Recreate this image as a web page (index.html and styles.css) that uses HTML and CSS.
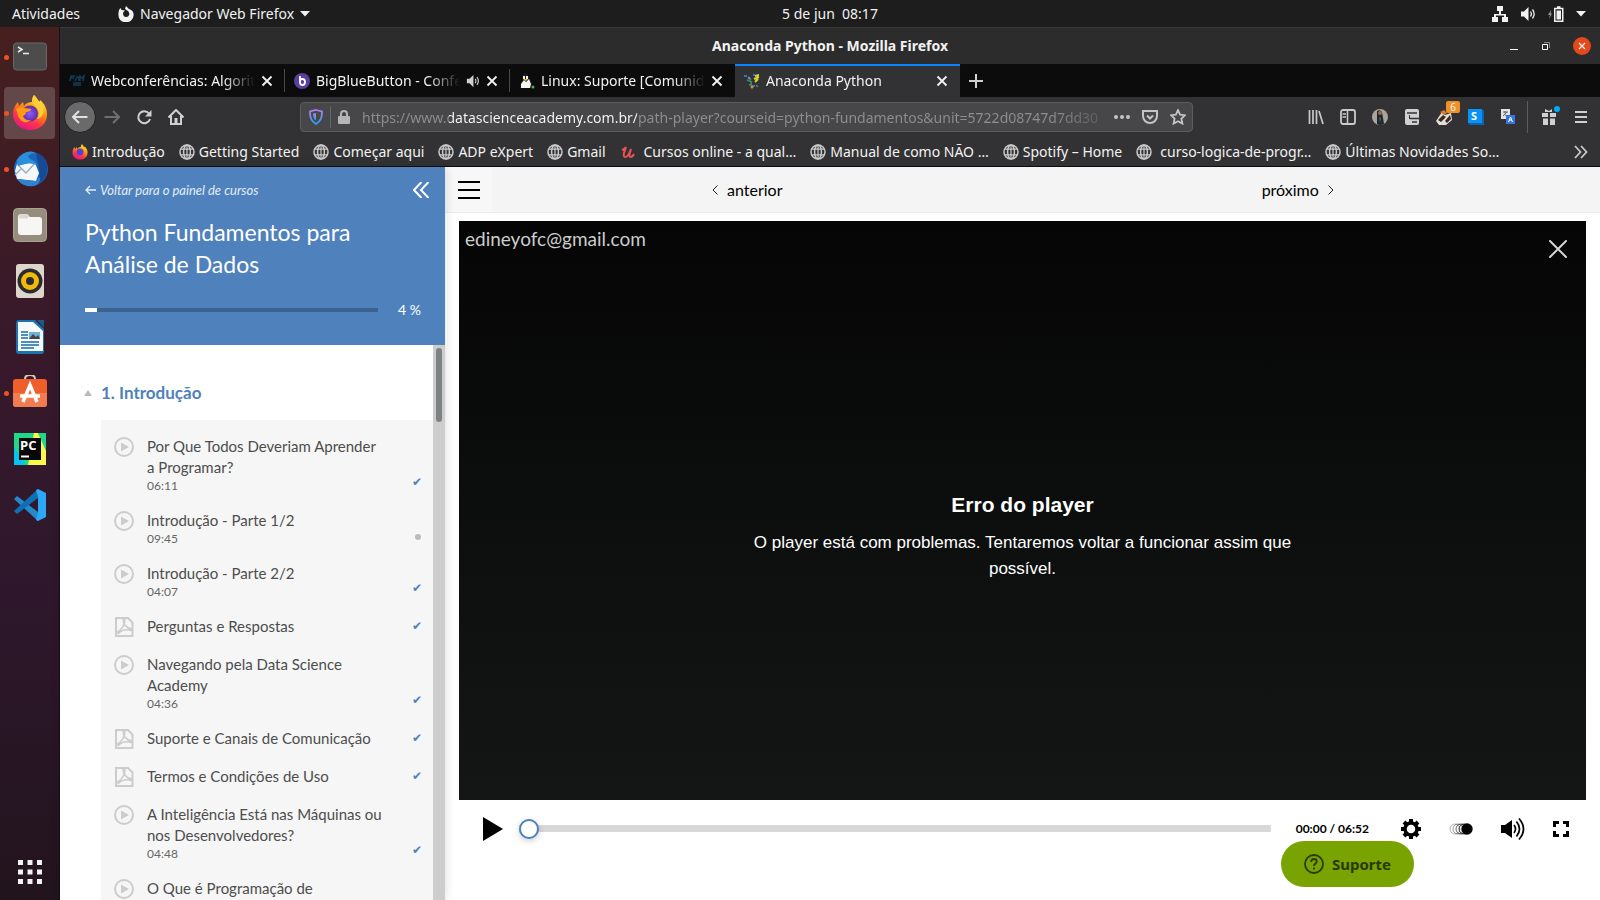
FILE: index.html
```html
<!DOCTYPE html>
<html lang="pt-BR">
<head>
  <meta charset="UTF-8" />
  <meta name="viewport" content="width=device-width, initial-scale=1.0" />
  <title>Anaconda Python</title>
  <link rel="stylesheet" href="styles.css">
</head>
<body>
  <!-- shared icons -->
  <svg class="defs" width="0" height="0" aria-hidden="true">
    <symbol id="globe" viewBox="0 0 16 16">
      <g fill="none" stroke="#c9c9ca" stroke-width="1.5">
        <circle cx="8" cy="8" r="7" /><ellipse cx="8" cy="8" rx="3.4" ry="7" /><path d="M8 1v14M2 5.2h12M2 10.8h12" stroke-width="1.2" />
      </g>
    </symbol>
    <symbol id="close" viewBox="0 0 12 12"><path d="M1.5 1.5l9 9M10.5 1.5l-9 9" stroke="currentColor" stroke-width="1.8" /></symbol>
    <symbol id="play" viewBox="0 0 20 20"><circle cx="10" cy="10" r="9" fill="none" stroke="#ccc" stroke-width="2" /><path d="M7 5.5v9l8-4.5z" fill="#ccc" /></symbol>
    <symbol id="pdf" viewBox="0 0 20 20">
      <path d="M2 1h12l4.500 4.500V19H2z" fill="none" stroke="#ccc" stroke-width="2" />
      <path d="M9 1c0 6 2 10 9 11M11 1c0 7-3 12-9 15M4 17c3-4 8-5 14-3.500" fill="none" stroke="#ccc" stroke-width="1.600" />
    </symbol>
    <symbol id="sound" viewBox="0 0 16 16"><path d="M1 5.500h3L8.500 1v14L4 10.500H1z" fill="currentColor" /><path d="M10.500 5.500q1.700 2.500 0 5M12.500 3.500q3.300 4.500 0 9" fill="none" stroke="currentColor" stroke-width="1.300" /></symbol>
  </svg>

  <header class="topbar">
    <div class="topbar-left">
      <button class="top-btn">Atividades</button>
      <button class="top-btn app-menu">
        <svg width="16" height="16" viewBox="0 0 16 16"><path d="M8 0l3 3C15 4 16 7 15.500 10A7.500 6.500 0 0 1 .5 9.500C.2 6 1 3 2.500 2l1 2L7 4.500 5.500 6C4.500 7 5 11 8 11c4 0 4-4 2-6L7 3z" fill="#f2f2f2" /></svg>
        <span>Navegador Web Firefox</span>
        <svg width="10" height="6" viewBox="0 0 10 6"><path d="M0 0h10L5 5.500z" fill="#f2f2f2" /></svg>
      </button>
    </div>
    <button class="top-btn clock">5 de jun&nbsp; 08:17</button>
    <div class="status">
      <svg width="16" height="16" viewBox="0 0 16 16" fill="#f2f2f2"><path d="M5 0h6v5H9v3h5v3h2v5h-6v-5h2V9.500H4V11h2v5H0v-5h2V8h5V5H5z" /></svg>
      <svg width="16" height="16" color="#f2f2f2"><use href="#sound" /></svg>
      <svg width="16" height="16" viewBox="0 0 16 16"><path d="M3 4L0 9h2l-1 4 3-5.500H2.500z" fill="#999" /><path d="M6.750 2.500h8v12.700h-8zM9 1h3.500" fill="none" stroke="#f2f2f2" stroke-width="1.500" /><path d="M8.500 4.500H13v9H8.500z" fill="#f2f2f2" /></svg>
      <svg width="10" height="6" viewBox="0 0 10 6"><path d="M0 0h10L5 5.500z" fill="#f2f2f2" /></svg>
    </div>
  </header>

  <div class="desktop">
    <nav class="dock" aria-label="Dock">
      <button class="dock-item running" aria-label="Terminal">
        <svg width="36" height="36" viewBox="0 0 36 36"><rect x="1.500" y="4" width="33" height="27" rx="3" fill="#4c4c4c" stroke="#686868" /><path d="M6 8l4 2.500L6 13M11 14.500h6" fill="none" stroke="#eee" stroke-width="1.500" /></svg>
      </button>
      <button class="dock-item running active" aria-label="Firefox">
        <svg width="36" height="36" viewBox="0 0 36 36">
          <defs><linearGradient id="fx" x1=".8" y1="0" x2=".3" y2="1"><stop offset="0" stop-color="#fff44f" /><stop offset=".4" stop-color="#ff980e" /><stop offset=".7" stop-color="#ff3647" /><stop offset="1" stop-color="#e31587" /></linearGradient>
          <radialGradient id="fg"><stop offset="0" stop-color="#9059ff" /><stop offset="1" stop-color="#5b2fa8" /></radialGradient></defs>
          <path d="M22 0c3 3 4 5 5 8 1-1 1-2 1-3 5 4 7 9 7 14 0 10-7 16-17 16S1 28 1 19C1 14 3 10 6 7l1 4 4-4 1 4c2-3 5-4 8-4 0-3 1-5 2-7z" fill="url(#fx)" />
          <circle cx="18" cy="18.500" r="8" fill="url(#fg)" />
          <path d="M4 14c3-2 6-3 8-1l7 1c0 2-3 3-5 3 0 3-2 3-3 4 1 3 4 5 8 4-3 3-9 3-11-1-3-3-2-6-4-10z" fill="#ff9b12" />
          <path d="M22 0c-4 6-1 9 3 13 3 4 2 8 0 11 8-1 9-14 2-18z" fill="#ffcf36" />
        </svg>
      </button>
      <button class="dock-item running" aria-label="Thunderbird">
        <svg width="36" height="36" viewBox="0 0 36 36">
          <circle cx="19" cy="18" r="17" fill="#1c65b8" /><path d="M5 9C9 2 17-2 24 2c-7 0-9 4-9 8L6 16z" fill="#2b8fd9" /><path d="M24 2c8 2 13 10 11 18-2 9-8 14-15 15 8-4 8-10 7-18z" fill="#174a94" />
          <path d="M5 13l18-1 4 10-3 8-19-2-2-8z" fill="#f4f7fb" /><path d="M5 13l9 9 9-10M3 24l6-6" fill="none" stroke="#9aaabd" stroke-width="1.300" /><path d="M6 15C4 9 8 5 14 3l4 5c3 1 6 3 7 6l-8-2z" fill="#2b8fd9" /><path d="M5 28l19 2 4-4c1 4-2 8-6 9-7 1-13-1-17-7z" fill="#3182cd" />
        </svg>
      </button>
      <button class="dock-item" aria-label="Arquivos">
        <svg width="36" height="36" viewBox="0 0 36 36"><rect x="1.500" y="1.500" width="33" height="33" rx="4" fill="#958e7e" stroke="#aaa392" /><path d="M6 10q0-3 3-3h6l3 3h9q3 0 3 3v12q0 3-3 3H9q-3 0-3-3z" fill="#f7f6f3" /><path d="M7 9q0-2 2-2h6l2 3-2 1.500H7z" fill="#ddd9d0" /></svg>
      </button>
      <button class="dock-item" aria-label="Rhythmbox">
        <svg width="36" height="36" viewBox="0 0 36 36"><rect x="4" y="1" width="28" height="34" rx="3" fill="#dcd6cd" /><circle cx="18" cy="18" r="12.500" fill="#2b2b2e" /><circle cx="18" cy="18" r="9" fill="#f0b90b" /><circle cx="18" cy="18" r="4" fill="#2b2b2e" /></svg>
      </button>
      <button class="dock-item" aria-label="LibreOffice Writer">
        <svg width="36" height="36" viewBox="0 0 36 36"><path d="M7 1h16l9 9v22q0 3-3 3H7q-3 0-3-3V4q0-3 3-3z" fill="#1b74ad" /><path d="M6 3h15l10 9v20H6z" fill="#f6fafc" /><path d="M25 1h7v8z" fill="#1a5c88" /><path d="M9 13h7M9 16h7M9 19h7M9 23h18M9 26h18M9 29h13" stroke="#1b6ca3" stroke-width="1.500" /><path d="M17 13h11v7H17z" fill="#6ab4dc" /><path d="M17 20l4-5 3 3 2-2 2 4z" fill="#444" /></svg>
      </button>
      <button class="dock-item running" aria-label="Ubuntu Software">
        <svg width="36" height="36" viewBox="0 0 36 36"><path d="M13 6V4q0-4 5-4t5 4v2" fill="none" stroke="#d8c9b0" stroke-width="2" /><rect x="1" y="4" width="34" height="28" rx="3" fill="#ee5f2c" /><path d="M1 18h34v11q0 3-3 3H4q-3 0-3-3z" fill="#f27c50" /><path d="M11 27l7-17 7 17M8 21h20" fill="none" stroke="#fff" stroke-width="3.500" /></svg>
      </button>
      <button class="dock-item" aria-label="PyCharm">
        <svg width="36" height="36" viewBox="0 0 36 36"><path d="M2 2h32v32H2z" fill="#21d789" /><path d="M22 2h4l8 18v14H16z" fill="#fcf84a" /><path d="M26 2h8v14z" fill="#21d789" /><path d="M2 16l12 18H2z" fill="#07c3f2" /><path d="M7 7h22v22H7z" fill="#080808" /><text class="pc-logo" x="8" y="19">PC</text><path d="M9 25.500h8" stroke="#fff" stroke-width="2" /></svg>
      </button>
      <button class="dock-item" aria-label="Visual Studio Code">
        <svg width="36" height="36" viewBox="0 0 36 36"><path d="M2 12l3-3 21 16v9z" fill="#2489ca" /><path d="M2 24l3 3 21-16V2z" fill="#0f6fb5" /><path d="M26 2l8 4v24l-8 4-2-1 2-7V10l-2-7z" fill="#2aa7f5" /></svg>
      </button>
      <button class="dock-item apps" aria-label="Mostrar aplicativos">
        <svg width="24" height="24" viewBox="0 0 24 24"><path d="M2.500 0v24M12 0v24M21.500 0v24" stroke="#f2f2f2" stroke-width="5" stroke-dasharray="5 4.500" /></svg>
      </button>
    </nav>

    <div class="browser">
      <div class="titlebar">
        <span class="window-title">Anaconda Python - Mozilla Firefox</span>
        <div class="window-btns">
          <button aria-label="Minimizar"><svg width="10" height="10" viewBox="0 0 10 10"><path d="M1 8.500h8" stroke="#fff" /></svg></button>
          <button aria-label="Restaurar"><svg width="10" height="10" viewBox="0 0 10 10"><path d="M1.500 3.500h5v5h-5z" fill="none" stroke="#fff" /><path d="M3 1.500h5.500V7" fill="none" stroke="#888" /></svg></button>
          <button class="win-close" aria-label="Fechar"><svg width="8" height="8"><use href="#close" /></svg></button>
        </div>
      </div>

      <div class="tabs">
        <div class="tab">
          <svg width="16" height="16" viewBox="0 0 16 16"><path d="M1 8l1-5h4M2 5h3M6 8l2-4h2v4M11 8V3l2 2 2-2-1 5M4 10h8M4 12h8" fill="none" stroke="#123c58" stroke-width="1.500" /></svg>
          <span class="tab-title">Webconferências: Algorit</span>
          <button aria-label="Fechar aba"><svg width="12" height="12"><use href="#close" /></svg></button>
        </div>
        <div class="tab">
          <svg width="16" height="16" viewBox="0 0 16 16"><circle cx="8" cy="8" r="8" fill="#5b3f9c" /><path d="M6 3v7M6 8q0-2 2.500-2t2.500 3-2.500 3T6 9.500" fill="none" stroke="#fff" stroke-width="1.800" /></svg>
          <span class="tab-title">BigBlueButton - Confe</span>
          <svg class="tab-sound" width="14" height="14"><use href="#sound" /></svg>
          <button aria-label="Fechar aba"><svg width="12" height="12"><use href="#close" /></svg></button>
        </div>
        <div class="tab">
          <svg width="16" height="16" viewBox="0 0 16 16"><path d="M4 1q3-2 5 1l3 6 2 7H1l1-5 2-4z" fill="#1b1b1b" /><path d="M5 7l2 2 3-3 2 5-1 4H2v-4zM4 3h2v3H4zM7 3h2v3H7z" fill="#f5f5f5" /><path d="M4 6h5l-2 2z" fill="#f3b51b" /><circle cx="14" cy="14" r="1.500" fill="#4caf50" /></svg>
          <span class="tab-title">Linux: Suporte [Comunid</span>
          <button aria-label="Fechar aba"><svg width="12" height="12"><use href="#close" /></svg></button>
        </div>
        <div class="tab active">
          <svg width="16" height="16" viewBox="0 0 16 16"><path d="M0 3h3M4 4l3 3M9 2h2M8 13h3" stroke="#2877c8" stroke-width="2" /><path d="M11 3l4-1M10 6l5-2M11 9l3-3" stroke="#d8d231" stroke-width="2" /><path d="M3 7l5 2M7 8v5M5 12l3-1M12 12l2 2" stroke="#3a8f62" stroke-width="1.500" /><circle cx="8" cy="14" r="1.500" fill="#e8842b" /><circle cx="5" cy="5" r="1" fill="#e8842b" /></svg>
          <span class="tab-title">Anaconda Python</span>
          <button aria-label="Fechar aba"><svg width="12" height="12"><use href="#close" /></svg></button>
        </div>
        <button class="new-tab" aria-label="Nova aba"><svg width="14" height="14" viewBox="0 0 14 14"><path d="M7 0v14M0 7h14" stroke="#d0d0d0" stroke-width="2" /></svg></button>
      </div>

      <div class="navbar">
        <button class="tool back" aria-label="Voltar"><svg width="16" height="16" viewBox="0 0 16 16"><path d="M15.500 8H1.500M7 2L1 8l6 6" fill="none" stroke="#e0e0e0" stroke-width="2" /></svg></button>
        <button class="tool" aria-label="Avançar"><svg width="16" height="16" viewBox="0 0 16 16"><path d="M.5 8h14M9 2l6 6-6 6" fill="none" stroke="#6f6f71" stroke-width="2" /></svg></button>
        <button class="tool" aria-label="Recarregar"><svg width="16" height="16" viewBox="0 0 16 16"><path d="M13 4.500A6 6 0 1 0 14 10" fill="none" stroke="#d0d0d1" stroke-width="2" /><path d="M15.500 1v6.500H9z" fill="#d0d0d1" /></svg></button>
        <button class="tool" aria-label="Início"><svg width="16" height="16" viewBox="0 0 16 16"><path d="M.5 8.500L8 1l7.500 7.500M3 7v8h10V7" fill="none" stroke="#d0d0d1" stroke-width="2" /><path d="M6.500 9h3v6h-3z" fill="#d0d0d1" /></svg></button>

        <div class="urlbar">
          <svg width="14" height="16" viewBox="0 0 14 16"><defs><linearGradient id="shield" x2="0" y2="1"><stop offset="0" stop-color="#b080f0" /><stop offset="1" stop-color="#2a9df4" /></linearGradient></defs><path d="M7 1l6 1.500c0 6-1 9.500-6 12.500C2 12 1 8.500 1 2.500z" fill="none" stroke="url(#shield)" stroke-width="1.800" /><path d="M7 4l-3 .8c.2 3.500.8 5.200 3 7z" fill="url(#shield)" /></svg>
          <span class="url-sep"></span>
          <svg width="12" height="14" viewBox="0 0 12 14"><path d="M3 7V4q0-3 3-3t3 3v3" fill="none" stroke="#b5b5b6" stroke-width="2" /><rect y="6" width="12" height="8" rx="1" fill="#b5b5b6" /></svg>
          <input class="url" type="text" aria-label="Endereço" value="https://www.datascienceacademy.com.br/path-player?courseid=python-fundamentos&amp;unit=5722d08747d7dd30">
          <button aria-label="Ações da página"><svg width="16" height="16" viewBox="0 0 16 16" fill="#c4c4c5"><circle cx="2" cy="8" r="2" /><circle cx="8" cy="8" r="2" /><circle cx="14" cy="8" r="2" /></svg></button>
          <button aria-label="Salvar no Pocket"><svg width="16" height="16" viewBox="0 0 16 16" fill="none" stroke="#c4c4c5" stroke-width="2"><path d="M1 2h14v5a7 7 0 0 1-14 0zM5 6.500l3 3 3-3" /></svg></button>
          <button aria-label="Favoritar"><svg width="16" height="16" viewBox="0 0 16 16" fill="none" stroke="#c4c4c5" stroke-width="1.800"><path d="M8 1l2.100 4.600 5 .6-3.700 3.400 1 5L8 12.200l-4.400 2.400 1-5L.9 6.200l5-.6z" /></svg></button>
        </div>

        <button class="tool" aria-label="Biblioteca"><svg width="16" height="16" viewBox="0 0 16 16"><path d="M1.500 1v14M5 1v14M8.500 1v14M11 2l4 13" stroke="#c9c9ca" stroke-width="1.700" /></svg></button>
        <button class="tool" aria-label="Painel lateral"><svg width="16" height="16" viewBox="0 0 16 16"><rect x="1" y="1" width="14" height="14" rx="2" fill="none" stroke="#c9c9ca" stroke-width="1.800" /><path d="M7.500 1v14M2.500 5H6M2.500 8H6" stroke="#c9c9ca" stroke-width="1.500" /></svg></button>
        <button class="tool" aria-label="Conta"><svg width="16" height="16" viewBox="0 0 16 16"><circle cx="8" cy="8" r="8" fill="#aaa59c" /><path d="M5 2q3-2 5 1l2 12q-4 2-7 0z" fill="#25262a" /><circle cx="8" cy="4" r="2" fill="#9b6c4d" /><path d="M7 8l2 1-1 5z" fill="#416b93" /></svg></button>
        <button class="tool" aria-label="Extensão"><svg width="16" height="16" viewBox="0 0 16 16"><rect x="1" y="0" width="14" height="16" rx="2" fill="#d0d0d1" /><path d="M3 4h10M6 9.500h9M8 13h5" stroke="#323234" stroke-width="1.500" /><path d="M5.500 6v4" stroke="#323234" /></svg></button>
        <button class="tool badged" aria-label="Privacy Badger"><svg width="18" height="16" viewBox="0 0 18 16"><path d="M1 12L7 3l3 3 6-2 1 7-6 5H4z" fill="#e4ddd4" /><path d="M3 11l5-5 3 2-5 5zM10 12l5-6 1 4-4 4z" fill="#3a2b25" /><path d="M5 3l4-2 3 3-3 2z" fill="#d77b2b" /></svg><span class="badge">6</span></button>
        <button class="tool" aria-label="Skype"><svg width="16" height="16" viewBox="0 0 16 16"><path d="M0 0h14l2 2v14H2l-2-2z" fill="#0865b4" /><path d="M0 0h14v14H0z" fill="#0a93f5" /><text class="s-logo" x="3" y="11">S</text></svg></button>
        <button class="tool" aria-label="Tradutor"><svg width="16" height="16" viewBox="0 0 16 16"><path d="M1 0h9v10H1z" fill="#e4e4e4" /><path d="M3 3h5M5 2v2M3 7l4-4M4 5l4 3" stroke="#666" /><path d="M6 6h9v9H6z" fill="#3778e0" /><path d="M8.500 13l2-5 2 5M9 11h3" fill="none" stroke="#fff" /></svg></button>
        <span class="nav-sep"></span>
        <button class="tool badged" aria-label="Novidades"><svg width="16" height="16" viewBox="0 0 16 16" fill="#d0d0d1"><path d="M1 4h6v4H1zM9 4h6v4H9zM2 9.500h5V16H2zM9 9.500h5V16H9zM4 0l4 2 3-2v3H4z" /></svg><span class="dot"></span></button>
        <button class="tool" aria-label="Menu"><svg width="14" height="14" viewBox="0 0 14 14"><path d="M1 2h12M1 7h12M1 12h12" stroke="#d0d0d1" stroke-width="2" /></svg></button>
      </div>

      <div class="bookmarks">
        <a href="#"><svg width="16" height="16" viewBox="0 0 36 36"><path d="M22 0c3 3 4 5 5 8 1-1 1-2 1-3 5 4 7 9 7 14 0 10-7 16-17 16S1 28 1 19C1 14 3 10 6 7l1 4 4-4 1 4c2-3 5-4 8-4 0-3 1-5 2-7z" fill="url(#fx)" /><circle cx="18" cy="18" r="8" fill="#5b3fd0" /></svg>Introdução</a>
        <a href="#"><svg width="16" height="16"><use href="#globe" /></svg>Getting Started</a>
        <a href="#"><svg width="16" height="16"><use href="#globe" /></svg>Começar aqui</a>
        <a href="#"><svg width="16" height="16"><use href="#globe" /></svg>ADP eXpert</a>
        <a href="#"><svg width="16" height="16"><use href="#globe" /></svg>Gmail</a>
        <a class="wide" href="#"><svg width="16" height="16" viewBox="0 0 16 16"><path d="M2 6q3-1 4-3L4 9q-1 4 1.500 4Q8 13 11 5L9.500 10q-.5 3 1 3 2 0 3.500-3" fill="none" stroke="#ec5252" stroke-width="2" /></svg>Cursos online - a qual…</a>
        <a href="#"><svg width="16" height="16"><use href="#globe" /></svg>Manual de como NÃO …</a>
        <a href="#"><svg width="16" height="16"><use href="#globe" /></svg>Spotify – Home</a>
        <a class="wide" href="#"><svg width="16" height="16"><use href="#globe" /></svg>curso-logica-de-progr…</a>
        <a href="#"><svg width="16" height="16"><use href="#globe" /></svg>Últimas Novidades So…</a>
        <button class="more" aria-label="Mais favoritos"><svg width="14" height="14" viewBox="0 0 14 14"><path d="M1 1l5.500 6L1 13M7 1l5.500 6L7 13" fill="none" stroke="#c9c9ca" stroke-width="1.800" /></svg></button>
      </div>

      <div class="page">
        <aside class="sidebar">
          <div class="course">
            <div class="course-top">
              <a href="#"><svg width="11" height="10" viewBox="0 0 11 10"><path d="M11 5H1M5 1L1 5l4 4" fill="none" stroke="#e3edf8" stroke-width="1.300" /></svg>Voltar para o painel de cursos</a>
              <button aria-label="Recolher"><svg width="16" height="16" viewBox="0 0 16 16"><path d="M8.500 0L1 8l7.500 8M15.500 0L8 8l7.500 8" fill="none" stroke="#fff" stroke-width="2" /></svg></button>
            </div>
            <h1>Python Fundamentos para Análise de Dados</h1>
            <div class="progress">
              <div class="bar"><div class="bar-fill" style="width: 4%"></div></div>
              <span>4 %</span>
            </div>
          </div>
          <div class="lessons-wrap">
            <div class="lessons">
              <h2><svg width="8" height="6" viewBox="0 0 8 6"><path d="M4 0l4 6H0z" fill="#bbb" /></svg>1. Introdução</h2>
              <ul>
                <li><svg width="20" height="20"><use href="#play" /></svg><a href="#">Por Que Todos Deveriam Aprender a Programar?<small>06:11</small></a><span class="check">✔</span></li>
                <li><svg width="20" height="20"><use href="#play" /></svg><a href="#">Introdução - Parte 1/2<small>09:45</small></a><span class="check pending"></span></li>
                <li><svg width="20" height="20"><use href="#play" /></svg><a href="#">Introdução - Parte 2/2<small>04:07</small></a><span class="check">✔</span></li>
                <li><svg width="20" height="20"><use href="#pdf" /></svg><a href="#">Perguntas e Respostas</a><span class="check">✔</span></li>
                <li><svg width="20" height="20"><use href="#play" /></svg><a href="#">Navegando pela Data Science Academy<small>04:36</small></a><span class="check">✔</span></li>
                <li><svg width="20" height="20"><use href="#pdf" /></svg><a href="#">Suporte e Canais de Comunicação</a><span class="check">✔</span></li>
                <li><svg width="20" height="20"><use href="#pdf" /></svg><a href="#">Termos e Condições de Uso</a><span class="check">✔</span></li>
                <li><svg width="20" height="20"><use href="#play" /></svg><a href="#">A Inteligência Está nas Máquinas ou nos Desenvolvedores?<small>04:48</small></a><span class="check">✔</span></li>
                <li><svg width="20" height="20"><use href="#play" /></svg><a href="#">O Que é Programação de</a></li>
              </ul>
            </div>
            <div class="scrollbar"><div class="thumb"></div></div>
          </div>
        </aside>

        <main class="content">
          <div class="unit-nav">
            <button class="burger" aria-label="Menu"><svg width="22" height="18" viewBox="0 0 22 18"><path d="M0 1h22M0 9h22M0 17h22" stroke="#000" stroke-width="2" /></svg></button>
            <a href="#"><svg width="6" height="10" viewBox="0 0 6 10"><path d="M5.500.5L1 5l4.500 4.500" fill="none" stroke="#222" /></svg>anterior</a>
            <a href="#">próximo<svg width="6" height="10" viewBox="0 0 6 10"><path d="M.5.5L5 5 .5 9.500" fill="none" stroke="#222" /></svg></a>
          </div>

          <section class="video">
            <div class="video-top">
              <span>edineyofc@gmail.com</span>
              <button aria-label="Fechar vídeo"><svg width="18" height="18" viewBox="0 0 18 18"><path d="M1 1l16 16M17 1L1 17" stroke="#d5d5d5" stroke-width="2" stroke-linecap="round" /></svg></button>
            </div>
            <div class="error">
              <h3>Erro do player</h3>
              <p>O player está com problemas. Tentaremos voltar a funcionar assim que possível.</p>
            </div>
          </section>

          <div class="controls">
            <button aria-label="Reproduzir"><svg width="20" height="24" viewBox="0 0 20 24"><path d="M0 0l20 12L0 24z" /></svg></button>
            <input class="seek" type="range" min="0" max="412" value="0" aria-label="Posição">
            <span class="time">00:00 / 06:52</span>
            <button aria-label="Configurações"><svg width="20" height="20" viewBox="0 0 20 20"><circle cx="10" cy="10" r="6" fill="none" stroke="#000" stroke-width="3.500" /><path d="M10 0v4M10 16v4M0 10h4M16 10h4M3 3l3 3M14 14l3 3M17 3l-3 3M6 14l-3 3" stroke="#000" stroke-width="4" /></svg></button>
            <button aria-label="Velocidade"><svg width="24" height="12" viewBox="0 0 24 12"><g fill="none" stroke="#000"><circle cx="6" cy="6" r="5" opacity=".3" /><circle cx="9" cy="6" r="5" opacity=".4" /><circle cx="12" cy="6" r="5" opacity=".6" /><circle cx="15" cy="6" r="5" opacity=".8" /></g><circle cx="18" cy="6" r="5.700" /></svg></button>
            <button aria-label="Volume"><svg width="24" height="24" viewBox="0 0 24 24"><path d="M0 8h4l7-5v18l-7-5H0z" /><path d="M13 8q3 4 0 8M15.500 4.500q6 7.500 0 15M18 1.500q9 10.500 0 21" fill="none" stroke="#000" stroke-width="1.700" /></svg></button>
            <button aria-label="Tela cheia"><svg width="16" height="16" viewBox="0 0 16 16"><path d="M1.500 6V1.500H6M10 1.500h4.500V6M14.500 10v4.500H10M6 14.500H1.500V10" fill="none" stroke="#000" stroke-width="3" /></svg></button>
          </div>

          <button class="support">
            <svg width="20" height="20" viewBox="0 0 20 20" fill="none" stroke="#2a3900"><circle cx="10" cy="10" r="9" stroke-width="1.800" /><path d="M7.200 8q0-3 2.800-3t2.800 2.500c0 2-2.800 2-2.800 4.500M10 13.500v2" stroke-width="1.800" /></svg>
            Suporte
          </button>
        </main>
      </div>
    </div>
  </div>
</body>
</html>
```
FILE: styles.css
```css
* {
  box-sizing: border-box;
}

body {
  margin: 0;
  height: 100vh;
  display: flex;
  flex-direction: column;
  overflow: hidden;
  font-family: "Noto Sans", sans-serif;
  font-size: 14px;
  color: #f2f2f2;
  background: #2c1428;
}

button {
  padding: 0;
  border: none;
  background: none;
  font: inherit;
  color: inherit;
  display: flex;
  align-items: center;
  justify-content: center;
}

a {
  color: inherit;
  text-decoration: none;
}

svg {
  flex: none;
  display: block;
}

.defs {
  position: absolute;
}

/* gnome top bar */
.topbar {
  height: 27px;
  flex: none;
  display: grid;
  grid-template-columns: 60px 1fr auto 1fr;
  align-items: center;
  background: #1d1d1d;
}

.topbar-left {
  grid-column: 1 / 3;
  display: flex;
  gap: 38px;
  padding-left: 12px;
}

.app-menu {
  gap: 6px;
}

.status {
  display: flex;
  align-items: center;
  justify-content: flex-end;
  gap: 12px;
  padding-right: 14px;
}

.desktop {
  flex: 1;
  min-height: 0;
  display: flex;
}

/* dock */
.dock {
  width: 60px;
  flex: none;
  display: flex;
  flex-direction: column;
  gap: 4px;
  padding: 4px 4px 2px;
  background: linear-gradient(#46201f, #38192a 35%, #2e172c 65%, #22141d);
  border-right: 1px solid #1b1018;
}

.dock-item {
  position: relative;
  height: 52px;
  flex: none;
  border-radius: 4px;
}

.dock-item.active {
  background: #644749;
}

.dock-item.running::before {
  content: "";
  position: absolute;
  left: 0;
  width: 5px;
  height: 5px;
  border-radius: 50%;
  background: #e95420;
}

.dock-item.apps {
  margin-top: auto;
}

.pc-logo {
  font: bold 13px "Open Sans", sans-serif;
  fill: #fff;
}

.s-logo {
  font: bold 11px "Open Sans", sans-serif;
  fill: #fff;
}

/* browser window */
.browser {
  flex: 1;
  min-width: 0;
  display: flex;
  flex-direction: column;
}

.titlebar {
  height: 37px;
  flex: none;
  display: grid;
  grid-template-columns: 1fr auto 1fr;
  align-items: center;
  padding-bottom: 1px;
  background: #2c2c2c;
  border-top: 1px solid #383838;
}

.window-title {
  grid-column: 2;
  font-weight: bold;
}

.window-btns {
  display: flex;
  align-items: center;
  justify-content: flex-end;
  gap: 22px;
  padding-right: 9px;
}

.win-close {
  width: 18px;
  height: 18px;
  border-radius: 50%;
  background: #e2491b;
}

.tabs {
  height: 33px;
  flex: none;
  display: flex;
  background: #0c0c0d;
}

.tab {
  position: relative;
  flex: 0 1 225px;
  min-width: 0;
  display: flex;
  align-items: center;
  gap: 6px;
  padding: 0 12px 0 9px;
}

.tab:not(.active):not(:nth-child(3))::after {
  content: "";
  position: absolute;
  right: 0;
  top: 5px;
  bottom: 5px;
  width: 1px;
  background: #4a4a4b;
}

.tab.active {
  background: #323234;
  box-shadow: inset 0 2px #0a84ff;
}

.tab-title {
  flex: 1;
  overflow: hidden;
  white-space: nowrap;
  mask-image: linear-gradient(to left, transparent, #000 32px);
}

.tab-sound {
  color: #d0d0d0;
}

.new-tab {
  width: 32px;
}

.navbar {
  height: 40px;
  flex: none;
  display: flex;
  align-items: center;
  padding: 0 3px 0 4px;
  background: #323234;
}

.tool {
  width: 32px;
  height: 32px;
  flex: none;
}

.tool.back {
  border-radius: 50%;
  background: #6a6a6b;
  border: 1px solid #212122;
}

.urlbar {
  flex: 1;
  min-width: 0;
  height: 30px;
  margin: 0 107px 0 108px;
  display: flex;
  align-items: center;
  gap: 12px;
  padding: 0 6px 0 8px;
  background: #474749;
  border: 1px solid #5c5c5e;
  border-radius: 4px;
}

.url-sep {
  width: 1px;
  height: 22px;
  margin: 0 -5px;
  background: #67676a;
}

/* host is brighter than the rest of the address */
.url {
  flex: 1;
  min-width: 0;
  padding: 0;
  border: none;
  outline: none;
  font: inherit;
  color: transparent;
  background: linear-gradient(to right, #8e8e90 87px, #f9f9fa 87px, #f9f9fa 275px, #8e8e90 275px, #8e8e90 690px, #5a5a5c 100%);
  background-clip: text;
  -webkit-background-clip: text;
}

.nav-sep {
  width: 1px;
  height: 32px;
  margin: 0 5px 0 3px;
  background: #5c5c5e;
}

.badged {
  position: relative;
}

.badge {
  position: absolute;
  top: 0;
  right: 0;
  width: 14px;
  height: 12px;
  border-radius: 2px;
  background: #ee9126;
  font-size: 10px;
  line-height: 12px;
}

.dot {
  position: absolute;
  top: 5px;
  right: 5px;
  width: 6px;
  height: 6px;
  border-radius: 50%;
  background: #00a8f5;
}

.bookmarks {
  height: 30px;
  flex: none;
  display: flex;
  align-items: center;
  gap: 14px;
  padding: 0 12px;
  background: #323234;
  border-bottom: 1px solid #0c0c0d;
  white-space: nowrap;
}

.bookmarks a {
  display: flex;
  align-items: center;
  gap: 4px;
}

.bookmarks a.wide {
  gap: 8px;
}

.more {
  margin-left: auto;
}

/* course page */
.page {
  flex: 1;
  min-height: 0;
  display: flex;
  background: #fff;
  font-family: Lato, sans-serif;
}

.sidebar {
  position: relative;
  width: 385px;
  flex: none;
  display: flex;
  flex-direction: column;
  background: #fff;
  box-shadow: 0 0 10px rgba(0, 0, 0, 0.15);
}

.course {
  height: 178px;
  flex: none;
  padding: 15px 16px 0 25px;
  color: #fff;
  background: #4f81bc;
}

.course-top {
  display: flex;
  align-items: center;
  justify-content: space-between;
  font-size: 13px;
  font-style: italic;
  color: #e3edf8;
}

.course-top a {
  display: flex;
  align-items: center;
  gap: 4px;
}

.course h1 {
  margin: 18px 40px 0 0;
  font-size: 23px;
  font-weight: normal;
  line-height: 32px;
}

.progress {
  display: flex;
  align-items: center;
  gap: 20px;
  margin-top: 21px;
  padding-right: 8px;
  font-size: 14px;
}

.bar {
  flex: 1;
  height: 4px;
  background: #3c638f;
}

.bar-fill {
  height: 100%;
  background: #fff;
}

.lessons-wrap {
  flex: 1;
  min-height: 0;
  display: flex;
}

.lessons {
  flex: 1;
  overflow: hidden;
  padding: 37px 0 0 24px;
}

.lessons h2 {
  display: flex;
  align-items: center;
  gap: 9px;
  margin: 0 0 16px;
  font-size: 17px;
  line-height: 22px;
  color: #4f81bc;
}

.lessons ul {
  margin: 0 0 0 17px;
  padding: 8px 11px 0 13px;
  list-style: none;
  background: #f6f6f6;
}

.lessons li {
  display: flex;
  gap: 13px;
  padding: 8px 0 9px;
  font-size: 15px;
  line-height: 21px;
  color: #4d4d4d;
}

.lessons li svg {
  margin-top: 1px;
}

.lessons li a {
  width: 238px;
}

.lessons small {
  display: block;
  font-size: 12px;
  line-height: 15px;
  color: #666;
}

.check {
  align-self: flex-end;
  margin-left: auto;
  font-family: "DejaVu Sans", sans-serif;
  font-size: 12px;
  color: #4f81bc;
}

.check.pending {
  width: 6px;
  height: 6px;
  margin-bottom: 6px;
  margin-right: 1px;
  border-radius: 50%;
  background: #bbb;
}

.scrollbar {
  width: 12px;
  padding: 3px;
  background: #cdcdcd;
}

.thumb {
  height: 74px;
  border-radius: 3px;
  background: #7f8282;
}

.content {
  flex: 1;
  min-width: 0;
  display: flex;
  flex-direction: column;
  color: #000;
}

.unit-nav {
  height: 46px;
  flex: none;
  display: grid;
  grid-template-columns: 27px 1fr 1fr;
  align-items: center;
  justify-items: center;
  padding-right: 27px;
  background: #f4f4f4;
  border-bottom: 1px solid #ececec;
  font-size: 16px;
}

.unit-nav a {
  display: flex;
  align-items: center;
  gap: 9px;
}

.burger {
  justify-self: start;
  width: 47px;
  height: 100%;
  background: #f7f7f7;
}

.video {
  flex: 1;
  display: flex;
  flex-direction: column;
  margin: 8px 14px 0;
  background: linear-gradient(#050505, #141616);
  color: #fff;
}

.video-top {
  display: flex;
  justify-content: space-between;
  padding: 6px 19px 0 6px;
  font-size: 19px;
  line-height: 24px;
  color: #ccc;
}

.video-top button {
  margin-top: 13px;
}

.error {
  width: 560px;
  margin: 234px auto 0;
  text-align: center;
  font-family: "Liberation Sans", sans-serif;
  font-size: 17px;
  line-height: 26px;
}

.error h3 {
  margin: 0 0 12px;
  font-size: 21px;
}

.error p {
  margin: 0;
}

.controls {
  height: 57px;
  flex: none;
  display: flex;
  align-items: center;
  gap: 28px;
  padding: 0 31px 0 38px;
}

.seek {
  flex: 1;
  appearance: none;
  height: 20px;
  margin: 0 -3px 0 -12px;
  background: linear-gradient(#d8d8d8, #d8d8d8) center / 100% 7px no-repeat;
}

.seek::-webkit-slider-thumb {
  appearance: none;
  width: 20px;
  height: 20px;
  border: 2px solid #4f81bc;
  border-radius: 50%;
  background: #fff;
  box-shadow: 0 2px 6px rgba(0, 0, 0, 0.2);
}

.time {
  margin-right: 4px;
  font-size: 12px;
  font-weight: bold;
}

.support {
  align-self: flex-end;
  width: 133px;
  height: 46px;
  flex: none;
  gap: 8px;
  margin: -16px 186px 13px 0;
  border-radius: 23px;
  background: #78a300;
  color: #2a3900;
  font-family: "Noto Sans", sans-serif;
  font-size: 15px;
  font-weight: bold;
}
```
